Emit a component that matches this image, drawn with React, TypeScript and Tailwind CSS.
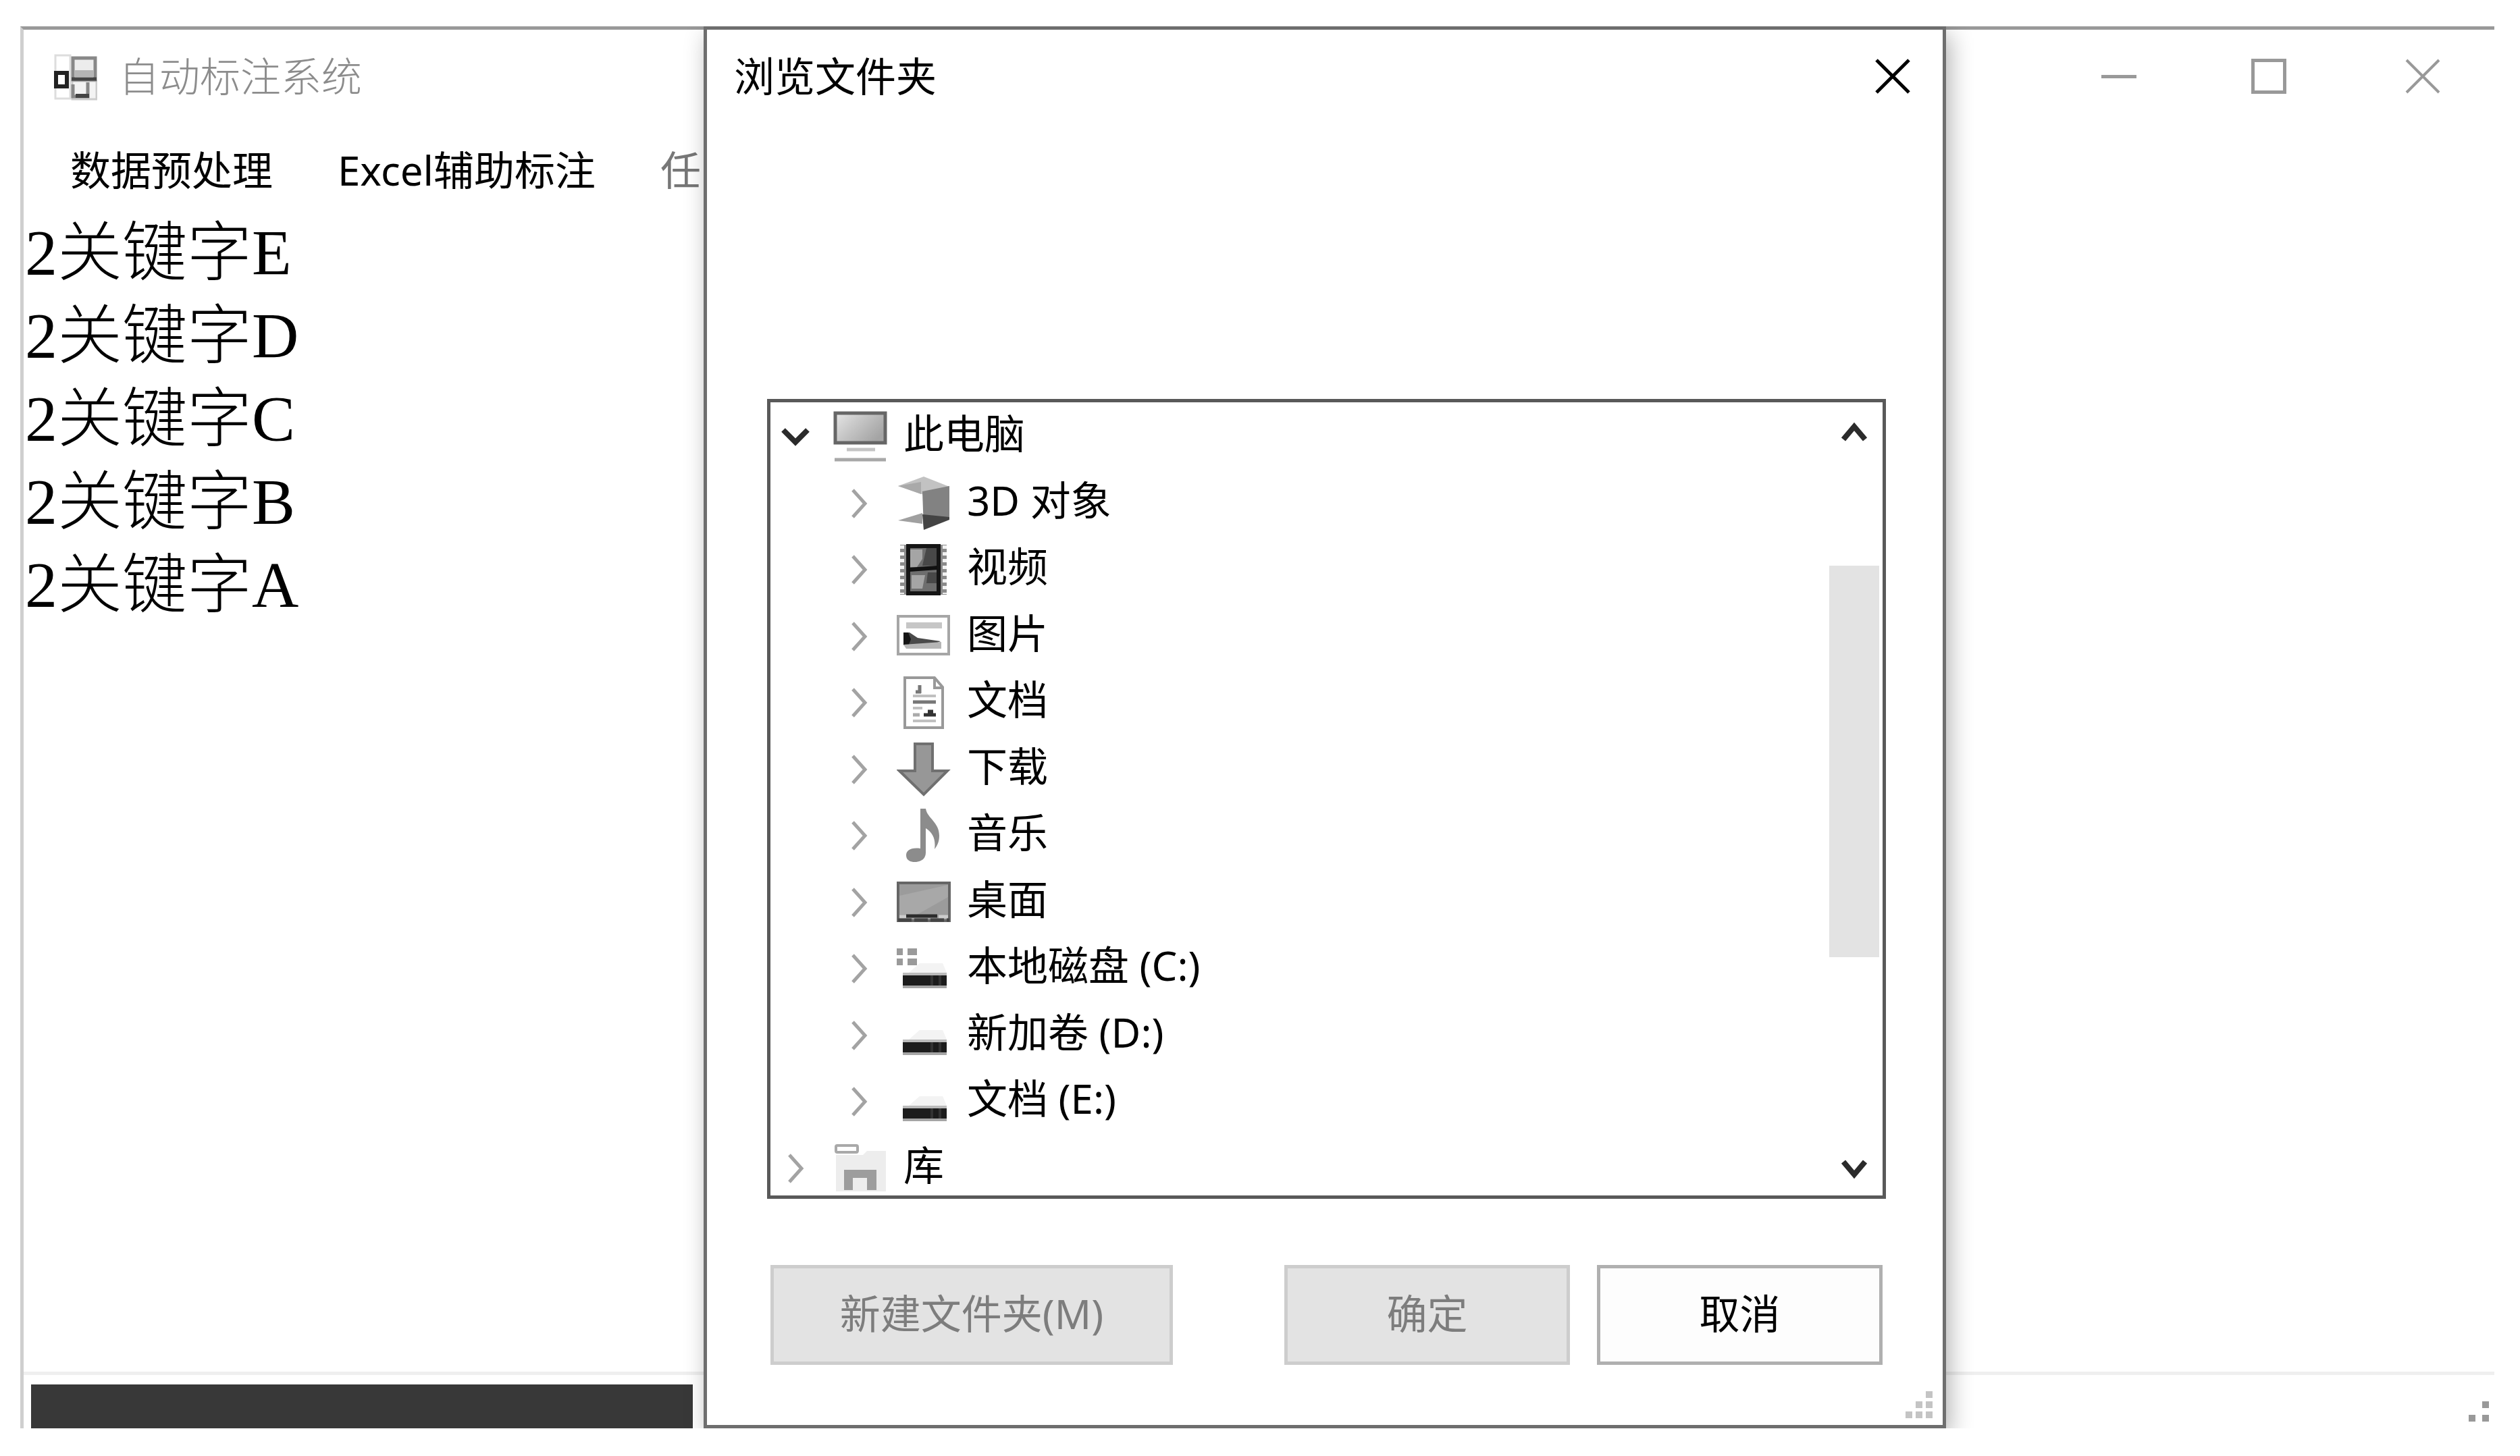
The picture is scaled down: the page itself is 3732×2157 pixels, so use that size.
import { ReactNode } from 'react'
import clsx from 'clsx'

// ═══════════════════════════════════════════════════════════════════════════
// DATA
// ═══════════════════════════════════════════════════════════════════════════

interface TreeNode {
  label: string
  icon: ReactNode
  level: 0 | 1
  open?: boolean
}

const keywords = ['2关键字E', '2关键字D', '2关键字C', '2关键字B', '2关键字A']

const nodes: TreeNode[] = [
  { label: '此电脑', icon: <ComputerIcon />, level: 0, open: true },
  { label: '3D 对象', icon: <CubeIcon />, level: 1 },
  { label: '视频', icon: <VideoIcon />, level: 1 },
  { label: '图片', icon: <PictureIcon />, level: 1 },
  { label: '文档', icon: <DocumentIcon />, level: 1 },
  { label: '下载', icon: <DownloadIcon />, level: 1 },
  { label: '音乐', icon: <MusicIcon />, level: 1 },
  { label: '桌面', icon: <DesktopIcon />, level: 1 },
  { label: '本地磁盘 (C:)', icon: <DriveIcon system />, level: 1 },
  { label: '新加卷 (D:)', icon: <DriveIcon />, level: 1 },
  { label: '文档 (E:)', icon: <DriveIcon />, level: 1 },
  { label: '库', icon: <LibraryIcon />, level: 0 },
]

// ═══════════════════════════════════════════════════════════════════════════
// ICONS
// Tree icons share an 80x80 box
// ═══════════════════════════════════════════════════════════════════════════

function Icon({ children }: { children: ReactNode }) {
  return (
    <svg viewBox="0 0 80 80" className="block size-20 shrink-0" aria-hidden="true">
      {children}
    </svg>
  )
}

function ComputerIcon() {
  return (
    <Icon>
      <defs>
        <linearGradient id="screen" x1="0" y1="0" x2="1" y2="0.6">
          <stop offset="0" stopColor="#e6e6e6" />
          <stop offset="0.5" stopColor="#c4c4c4" />
          <stop offset="1" stopColor="#a4a4a4" />
        </linearGradient>
      </defs>
      <rect x="3" y="5" width="74" height="44" fill="url(#screen)" stroke="#666" strokeWidth="5" />
      <path d="M20 59h42" stroke="#c4c4c4" strokeWidth="5" />
      <path d="M2 74h76" stroke="#a8a8a8" strokeWidth="5" />
    </Icon>
  )
}

function CubeIcon() {
  return (
    <Icon>
      <path d="M2 14 40 0l38 15-38 12Z" fill="#c2c2c2" />
      <path d="M2 14 36 8v18Z" fill="#a9a9a9" />
      <path d="M38 22 78 14v49L40 78Z" fill="#828282" />
      <path d="M38 56 78 60v4L40 79Z" fill="#444" />
      <path d="M2 65 38 54v16Z" fill="#a0a0a0" />
    </Icon>
  )
}

function VideoIcon() {
  return (
    <Icon>
      <rect x="5" y="3" width="69" height="74" fill="#8a8a8a" />
      <path d="M8 4v72M71 4v72" stroke="#f2f2f2" strokeWidth="6" strokeDasharray="5 5" />
      <rect x="17" y="5" width="45" height="70" fill="#6e6e6e" stroke="#151515" strokeWidth="6" />
      <path d="M20 10h18v14l-8 12H20ZM22 48h20l-4 20H22Z" fill="#a5a5a5" />
      <path d="M44 8h15v26H38ZM46 44h13v16H44Z" fill="#484848" />
      <path d="M18 40 60 37" stroke="#111" strokeWidth="6" />
    </Icon>
  )
}

function PictureIcon() {
  return (
    <Icon>
      <rect x="2" y="10" width="75" height="56" fill="#fff" stroke="#a6a6a6" strokeWidth="4" />
      <rect x="14" y="19" width="53" height="9" fill="#c6c6c6" />
      <path d="M10 34h9l12 8 34 5-14 6H10Z" fill="#4a4a4a" />
      <path d="M10 34h7l4 10-3 8h-8Z" fill="#151515" />
      <path d="M10 52 66 48v10H14Z" fill="#b5b5b5" />
    </Icon>
  )
}

function DocumentIcon() {
  return (
    <Icon>
      <path d="M12 3h44l12 14v60H12Z" fill="#fff" stroke="#999" strokeWidth="4" />
      <path d="M56 3v15h12" fill="none" stroke="#999" strokeWidth="4" />
      <path d="M34 14v12M28 24h8" stroke="#777" strokeWidth="5" />
      <path d="M24 30h34M24 48h14M24 67h34" stroke="#c0c0c0" strokeWidth="4" />
      <path d="M24 39h34" stroke="#777" strokeWidth="5" />
      <path d="M24 58h10" stroke="#aaa" strokeWidth="5" />
      <path d="M40 58h18M46 53h8" stroke="#333" strokeWidth="5" />
    </Icon>
  )
}

function DownloadIcon() {
  return (
    <Icon>
      <path d="M27 2h26v40h22L40 77 4 42h23Z" fill="#979797" stroke="#707070" strokeWidth="4" />
    </Icon>
  )
}

function MusicIcon() {
  return (
    <Icon>
      <path
        d="M35 0h8c2 14 20 20 20 40 0 9-3 15-7 20 2-14-2-24-13-31v36c0 10-8 14-16 14-9 0-13-4-13-10 0-7 7-12 21-10Z"
        fill="#8c8c8c"
      />
    </Icon>
  )
}

function DesktopIcon() {
  return (
    <Icon>
      <rect x="2" y="11" width="76" height="56" fill="#9b9b9b" stroke="#666" strokeWidth="4" />
      <path d="M4 30 76 14v18L30 58H4Z" fill="#a8a8a8" />
      <path d="M4 61h10M62 61h14" stroke="#ccc" strokeWidth="5" />
      <path d="M14 60h46" stroke="#2b2b2b" strokeWidth="5" />
      <path d="M2 66h76" stroke="#444" strokeWidth="5" strokeDasharray="20 4" />
    </Icon>
  )
}

function DriveIcon({ system = false }: { system?: boolean }) {
  return (
    <Icon>
      {system && <path d="M0 10h9v10H0ZM16 10h14v10H16ZM0 25h9v10H0ZM16 25h14v10H16Z" fill="#9a9a9a" />}
      <path d="M34 32h34l6 14H18Z" fill="#f3f3f3" />
      <path d="M9 46h65v5H9Z" fill="#bbb" />
      <rect x="9" y="50" width="65" height="15" fill="#1c1c1c" />
      <path d="M52 50v15M64 50v15" stroke="#333" strokeWidth="4" />
      <path d="M9 67h65" stroke="#a5a5a5" strokeWidth="4" />
    </Icon>
  )
}

function LibraryIcon() {
  return (
    <Icon>
      <path d="M4 20h40l6-6h28v60H4Z" fill="#ededed" />
      <rect x="4" y="6" width="32" height="10" rx="2" fill="#fff" stroke="#a9a9a9" strokeWidth="4" />
      <path d="M16 72V42h48v30H50V54H29v18Z" fill="#9d9d9d" />
    </Icon>
  )
}

function AppIcon() {
  return (
    <svg viewBox="0 0 64 70" className="block h-[70px] w-16" aria-hidden="true">
      <rect x="2" y="2" width="22" height="64" fill="#fff" stroke="#ddd" strokeWidth="3" />
      <rect x="27" y="40" width="36" height="27" fill="#f3f3f3" stroke="#ccc" strokeWidth="3" />
      <rect x="28" y="6" width="33" height="32" fill="#ececec" stroke="#888" strokeWidth="5" />
      <path d="M31 24h27v10H31Z" fill="#b5b5b5" />
      <path d="M26 37h37" stroke="#444" strokeWidth="5" />
      <rect x="3" y="28" width="16" height="20" fill="#fff" stroke="#222" strokeWidth="6" />
      <path d="M28 45v18h22V42" fill="none" stroke="#888" strokeWidth="5" />
      <path d="M32 62h20" stroke="#444" strokeWidth="6" />
    </svg>
  )
}

function CrossIcon({ className }: { className: string }) {
  return (
    <svg viewBox="0 0 52 52" className="block size-[52px]" aria-hidden="true">
      <path d="M2 2 50 50M50 2 2 50" fill="none" className={className} />
    </svg>
  )
}

// Triangular grip in a window's bottom right corner
function Grip({ rows, dot, pitch, className }: { rows: number; dot: number; pitch: number; className: string }) {
  const size = (rows - 1) * pitch + dot
  const dots = []
  for (let r = 0; r < rows; r++) {
    for (let c = rows - 1 - r; c < rows; c++) {
      dots.push(<rect key={`${r}-${c}`} x={c * pitch} y={r * pitch} width={dot} height={dot} />)
    }
  }
  return (
    <svg width={size} height={size} className={className} aria-hidden="true">
      {dots}
    </svg>
  )
}

// ═══════════════════════════════════════════════════════════════════════════
// FOLDER TREE
// ═══════════════════════════════════════════════════════════════════════════

function TreeRow({ node }: { node: TreeNode }) {
  return (
    <li className={clsx('flex items-center', node.level === 0 ? 'pl-[15px]' : 'pl-[109px]')}>
      <button aria-label={`展开 ${node.label}`} className="mr-[34px] flex h-12 w-11 shrink-0 items-center justify-center">
        {node.open ? (
          <svg viewBox="0 0 44 28" className="h-7 w-11" aria-hidden="true">
            <path d="M4 4 22 22 40 4" fill="none" stroke="#2b2b2b" strokeWidth="8" />
          </svg>
        ) : (
          <svg viewBox="0 0 26 44" className="h-11 w-[26px]" aria-hidden="true">
            <path d="M4 2 22 22 4 42" fill="none" stroke="#a3a3a3" strokeWidth="5" />
          </svg>
        )}
      </button>
      {node.icon}
      <span className="ml-6 whitespace-pre pb-2.5">{node.label}</span>
    </li>
  )
}

function FolderTree() {
  return (
    <div className="flex h-[1185px] overflow-hidden border-[5px] border-[#595959] bg-white">
      <ul className="grid h-[1184px] flex-1 grid-rows-12 pt-0.5">
        {nodes.map((node, i) => (
          <TreeRow key={i} node={node} />
        ))}
      </ul>
      <div className="mr-[5px] flex w-[74px] flex-col items-center">
        <button aria-label="向上滚动" className="flex h-[88px] items-center justify-center">
          <svg viewBox="0 0 38 30" className="h-[30px] w-[38px]" aria-hidden="true">
            <path d="M3 26 19 7 35 26" fill="none" stroke="#2b2b2b" strokeWidth="8" />
          </svg>
        </button>
        <div className="mt-[154px] h-[580px] w-full bg-[#e3e3e3]" />
        <button aria-label="向下滚动" className="mt-auto flex h-[78px] items-center justify-center">
          <svg viewBox="0 0 38 30" className="h-[30px] w-[38px]" aria-hidden="true">
            <path d="M3 4 19 23 35 4" fill="none" stroke="#2b2b2b" strokeWidth="8" />
          </svg>
        </button>
      </div>
    </div>
  )
}

// ═══════════════════════════════════════════════════════════════════════════
// BROWSE DIALOG
// ═══════════════════════════════════════════════════════════════════════════

function BrowseDialog() {
  return (
    <section
      role="dialog"
      aria-label="浏览文件夹"
      className="pointer-events-auto absolute inset-y-0 left-[1007px] flex w-[1840px] flex-col border-[5px] border-[#6e6e6e] bg-white text-black shadow-[6px_12px_32px_rgba(0,0,0,0.3)]"
    >
      <header className="flex h-[142px] shrink-0 items-center justify-between pl-10 pr-12">
        <h2 className="pb-1">浏览文件夹</h2>
        <button aria-label="关闭" className="pb-1">
          <CrossIcon className="stroke-black stroke-[5px]" />
        </button>
      </header>
      <div className="pl-[89px] pr-[84px] pt-[405px]">
        <FolderTree />
      </div>
      <div className="mt-[98px] flex pl-[94px] pr-[89px]">
        <button disabled className="h-[148px] w-[596px] border-[5px] border-[#cdcdcd] bg-[#e3e3e3] pb-1 text-[#7d7d7d]">
          新建文件夹(M)
        </button>
        <button disabled className="ml-auto h-[148px] w-[423px] border-[5px] border-[#cdcdcd] bg-[#e3e3e3] pb-1 text-[#7d7d7d]">
          确定
        </button>
        <button className="ml-10 h-[148px] w-[423px] border-[5px] border-[#b0b0b0] bg-[#fdfdfd] pb-1">取消</button>
      </div>
      <Grip rows={3} dot={10} pitch={15} className="absolute bottom-2.5 right-[15px] fill-[#c4c4c4]" />
    </section>
  )
}

// ═══════════════════════════════════════════════════════════════════════════
// MAIN WINDOW
// ═══════════════════════════════════════════════════════════════════════════

export default function App() {
  return (
    <div className="min-h-screen bg-white pl-[30px] pr-[38px] pt-[39px] font-['Noto_Sans','Noto_Sans_CJK_SC',sans-serif] text-[60px] leading-[80px]">
      <div className="relative flex flex-col border-l-[5px] border-t-[5px] border-l-[#cfcfcf] border-t-[#999]">
        <header className="flex h-[142px] items-center pl-[45px] pr-20">
          <AppIcon />
          <h1 className="ml-8 pb-1 font-light text-[#8c8c8c]">自动标注系统</h1>
          <div className="ml-auto flex items-center pb-1">
            <button aria-label="最小化" className="flex size-[52px] items-center">
              <span className="h-[5px] w-full bg-[#999]" />
            </button>
            <button aria-label="最大化" className="ml-[170px] size-[52px] border-[5px] border-[#999]" />
            <button aria-label="关闭" className="ml-[176px]">
              <CrossIcon className="stroke-[#999] stroke-[4px]" />
            </button>
          </div>
        </header>

        <nav className="flex h-[127px] items-center gap-24 pl-[69px] pt-1 text-black">
          <button>数据预处理</button>
          <button>Excel辅助标注</button>
          <button className="text-[#777]">任</button>
        </nav>

        <ul className="min-h-[1719px] pl-0.5 font-['Liberation_Serif','Noto_Sans_CJK_SC',serif] text-[96px] font-light leading-[123px] text-black">
          {keywords.map((word) => (
            <li key={word}>{word}</li>
          ))}
        </ul>

        <footer className="flex items-end justify-between border-t-[5px] border-[#efefef] pl-[11px] pr-2 pt-[14px]">
          <div className="h-[65px] w-[980px] bg-[#383838]" />
          <Grip rows={2} dot={10} pitch={20} className="mb-2.5 fill-[#999]" />
        </footer>

        {/* Clips the dialog's shadow to the window */}
        <div className="pointer-events-none absolute inset-x-0 -top-[5px] bottom-0 overflow-hidden">
          <BrowseDialog />
        </div>
      </div>
    </div>
  )
}
